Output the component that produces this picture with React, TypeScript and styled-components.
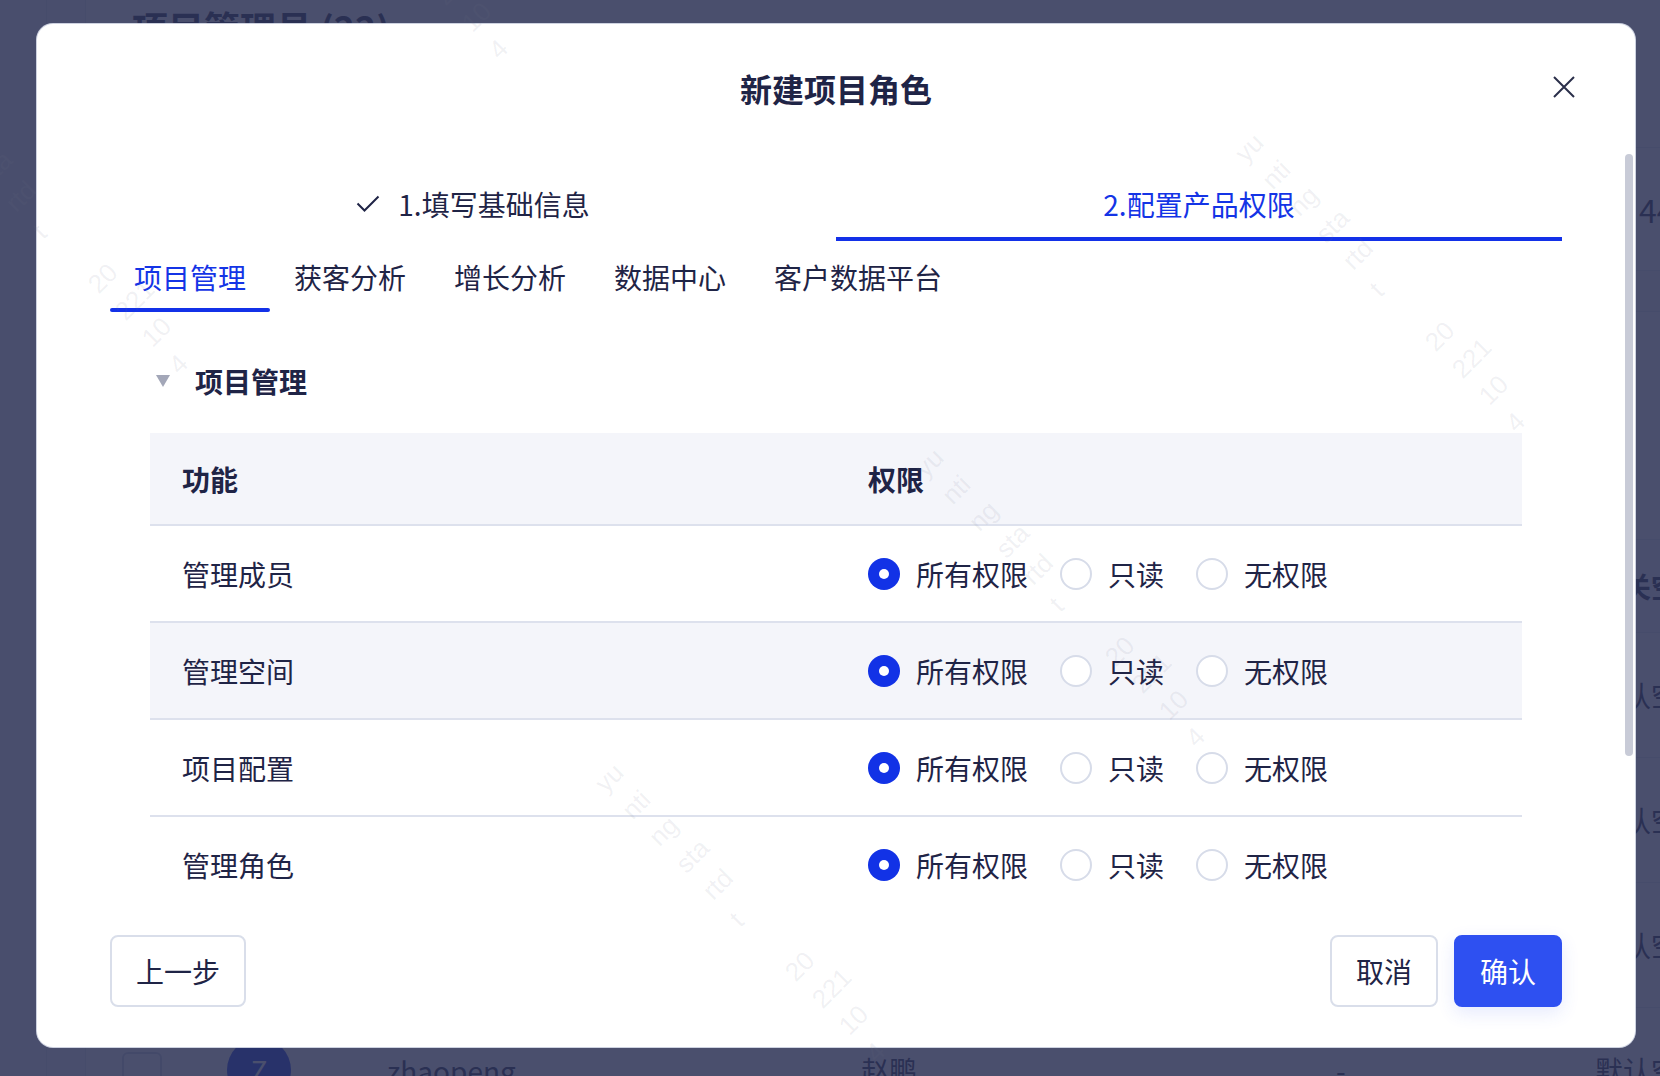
import React from "react";
import styled, { createGlobalStyle } from "styled-components";

const ink = "#1f2446";
const blue = "#1434e6";
const line = "#dde1ed";
const shade = "#f4f5fa";
const pageLine = "#e3e6ef";

const GlobalStyle = createGlobalStyle`
  * { box-sizing: border-box; }
  html, body { margin: 0; padding: 0; background: #494f6d; }
  body {
    font-family: "Noto Sans CJK SC", "Noto Sans", sans-serif;
    color: ${ink};
  }
`;

/* ---------- page behind the dialog ---------- */

const Page = styled.div`
  position: relative;
  width: 1660px;
  height: 1076px;
  overflow: hidden;
  background: #fff;
  display: grid;
  grid-template-columns: 47px 39px 1fr;
`;

const Rail = styled.div`
  border-right: 1px solid ${pageLine};
  background: #f7f8fb;
`;

const Main = styled.div`
  display: flex;
  flex-direction: column;
  min-width: 0;
`;

const PageTitle = styled.h1`
  margin: 0;
  height: 148px;
  padding: 5px 0 0 46px;
  font-size: 36px;
  line-height: 44px;
  font-weight: 700;
  white-space: nowrap;
  border-bottom: 1px solid ${pageLine};
`;

const Toolbar = styled.div`
  height: 123px;
  display: flex;
  align-items: center;
  padding-left: 1553px;
  font-size: 32px;
  white-space: nowrap;
  border-bottom: 1px solid ${pageLine};
`;

const Band = styled.div<{ $h: number; $fill?: boolean }>`
  height: ${(p) => p.$h}px;
  background: ${(p) => (p.$fill ? "#f3f4f8" : "#fff")};
  border-bottom: 1px solid ${pageLine};
`;

const MemberRow = styled.div<{ $head?: boolean }>`
  display: grid;
  grid-template-columns: 105px 160px 474px 475px 259px 1fr;
  align-items: center;
  height: ${(p) => (p.$head ? 93 : 125)}px;
  flex: none;
  font-size: 28px;
  font-weight: ${(p) => (p.$head ? 700 : 400)};
  border-bottom: 1px solid ${pageLine};
  background: ${(p) => (p.$head ? "#f5f6fa" : "#fff")};

  & > * {
    padding-left: 36px;
    white-space: nowrap;
  }
`;

const CheckBox = styled.span`
  display: block;
  width: 72px;
  height: 36px;
  &::before {
    content: "";
    display: block;
    width: 36px;
    height: 36px;
    border: 2px solid #cfd4e2;
    border-radius: 6px;
  }
`;

const AvatarCell = styled.div`
  display: flex;
`;

const Avatar = styled.span`
  width: 64px;
  height: 64px;
  border-radius: 50%;
  background: ${blue};
  color: #fff;
  font-size: 28px;
  display: flex;
  align-items: center;
  justify-content: center;
`;

/* ---------- overlay + dialog ---------- */

const Overlay = styled.div`
  position: absolute;
  inset: 0;
  background: rgba(44, 50, 85, 0.86);
  padding: 24px 0 0 37px;
`;

const Modal = styled.div`
  position: relative;
  width: 1598px;
  height: 1023px;
  padding: 0 73px;
  background: #fff;
  border-radius: 16px;
  box-shadow: 0 0 0 1px rgba(220, 224, 236, 0.9);
  display: flex;
  flex-direction: column;
  overflow: hidden;
`;

const Title = styled.h2`
  margin: 42px 0 0;
  text-align: center;
  font-size: 32px;
  line-height: 44px;
  font-weight: 600;
  color: ${ink};
`;

const CloseButton = styled.button`
  position: absolute;
  top: 52px;
  right: 60px;
  width: 22px;
  height: 22px;
  padding: 0;
  border: none;
  background: none;
  display: flex;
  color: #2a2f4a;
`;

const ScrollThumb = styled.div`
  position: absolute;
  top: 130px;
  right: 2px;
  width: 8px;
  height: 602px;
  border-radius: 4px;
  background: #c8cbd7;
`;

const Steps = styled.div`
  display: grid;
  grid-template-columns: 1fr 1fr;
  margin-top: 74px;
`;

const Step = styled.div<{ $active?: boolean }>`
  height: 57px;
  padding-bottom: 13px;
  display: flex;
  align-items: center;
  justify-content: center;
  gap: 18px;
  font-size: 28px;
  line-height: 40px;
  color: ${(p) => (p.$active ? blue : ink)};
  border-bottom: 4px solid ${(p) => (p.$active ? "#1331e8" : "transparent")};
`;

const Tabs = styled.div`
  display: flex;
  margin-top: 16px;
`;

const Tab = styled.div<{ $active?: boolean }>`
  position: relative;
  padding: 0 24px 15px;
  font-size: 28px;
  line-height: 40px;
  white-space: nowrap;
  color: ${(p) => (p.$active ? blue : ink)};

  &::after {
    content: "";
    position: absolute;
    left: 0;
    right: 0;
    bottom: 0;
    height: 4px;
    border-radius: 2px;
    background: ${(p) => (p.$active ? "#1331e8" : "transparent")};
  }
`;

const Body = styled.div`
  flex: 1;
  min-height: 0;
  overflow: hidden;
`;

const SectionHead = styled.div`
  display: flex;
  align-items: center;
  gap: 25px;
  margin-top: 49px;
  padding-left: 46px;
  font-size: 28px;
  line-height: 40px;
  font-weight: 700;
`;

const Table = styled.div`
  margin: 32px 40px 0;
`;

const TableRow = styled.div<{ $head?: boolean; $shaded?: boolean }>`
  display: grid;
  grid-template-columns: 1fr 1fr;
  align-items: center;
  height: ${(p) => (p.$head ? 93 : 97)}px;
  background: ${(p) => (p.$head || p.$shaded ? shade : "#fff")};
  border-bottom: 2px solid ${line};
  font-size: 28px;
  line-height: 40px;
  font-weight: ${(p) => (p.$head ? 700 : 400)};
`;

const Cell = styled.div`
  padding-left: 32px;
`;

const Options = styled.div`
  display: flex;
  align-items: center;
  gap: 32px;
  padding-left: 32px;
`;

const Option = styled.label`
  display: flex;
  align-items: center;
  gap: 16px;
  white-space: nowrap;
`;

const Radio = styled.span<{ $checked?: boolean }>`
  flex: none;
  width: 32px;
  height: 32px;
  border-radius: 50%;
  display: flex;
  align-items: center;
  justify-content: center;
  background: ${(p) => (p.$checked ? "#1232e6" : "#fff")};
  border: ${(p) => (p.$checked ? "none" : "2px solid #d7dce9")};

  &::after {
    content: "";
    display: ${(p) => (p.$checked ? "block" : "none")};
    width: 10px;
    height: 10px;
    border-radius: 50%;
    background: #fff;
  }
`;

const Footer = styled.div`
  display: flex;
  justify-content: space-between;
  padding: 28px 0 40px;
`;

const ButtonGroup = styled.div`
  display: flex;
  gap: 16px;
`;

const Button = styled.button<{ $primary?: boolean }>`
  height: 72px;
  padding: 0 24px;
  border-radius: 8px;
  font-family: inherit;
  font-size: 28px;
  line-height: 40px;
  border: 2px solid ${(p) => (p.$primary ? "#2e50f1" : "#d9deea")};
  background: ${(p) => (p.$primary ? "#2e50f1" : "#fff")};
  color: ${(p) => (p.$primary ? "#fff" : ink)};
  box-shadow: ${(p) => (p.$primary ? "0 6px 18px rgba(46, 80, 241, 0.12)" : "none")};
`;

/* ---------- watermark ---------- */

const WatermarkLayer = styled.div`
  position: absolute;
  inset: 0;
  pointer-events: none;
  z-index: 5;
`;

const Mark = styled.div<{ $x: number; $y: number }>`
  position: absolute;
  left: ${(p) => p.$x}px;
  top: ${(p) => p.$y}px;
  white-space: pre;
  font-family: "Liberation Sans", Arial, sans-serif;
  font-size: 26px;
  line-height: 38px;
  color: rgba(110, 115, 140, 0.1);
  transform: rotate(-45deg);
  transform-origin: 0 0;
`;

const markA = "yu\nnti\nng\nsta\nrtd\nt";
const markB = "20\n221\n10\n4";

const marks: { x: number; y: number; text: string }[] = [
  { x: 1226, y: 144, text: markA },
  { x: 906, y: 459, text: markA },
  { x: 586, y: 774, text: markA },
  { x: -111, y: 86, text: markA },
  { x: 1416, y: 333, text: markB },
  { x: 1096, y: 648, text: markB },
  { x: 776, y: 963, text: markB },
  { x: 79, y: 275, text: markB },
  { x: 399, y: -40, text: markB },
];

const CheckIcon = () => (
  <svg width="24" height="18" viewBox="0 0 24 18" fill="none">
    <polyline points="1.5,8.5 8.5,15.5 22.5,1.5" stroke={ink} strokeWidth="2" />
  </svg>
);

const CaretDown = () => (
  <svg width="14" height="12" viewBox="0 0 14 12">
    <polygon points="0,0 14,0 7,12" fill="#a3a7b8" />
  </svg>
);

const CloseIcon = () => (
  <svg width="22" height="22" viewBox="0 0 22 22">
    <path d="M1 1 L21 21 M21 1 L1 21" stroke="currentColor" strokeWidth="2" />
  </svg>
);

const tabs = ["项目管理", "获客分析", "增长分析", "数据中心", "客户数据平台"];
const features = ["管理成员", "管理空间", "项目配置", "管理角色"];
const levels = ["所有权限", "只读", "无权限"];

const members = [
  { initial: "L", account: "liming", name: "李明", phone: "-", space: "默认空间" },
  { initial: "W", account: "wangfang", name: "王芳", phone: "-", space: "默认空间" },
  { initial: "C", account: "chenjie", name: "陈杰", phone: "-", space: "默认空间" },
  { initial: "Z", account: "zhaopeng", name: "赵鹏", phone: "-", space: "默认空间" },
];

const App = () => {
  return (
    <>
      <GlobalStyle />
      <Page>
        <Rail />
        <Rail />
        <Main>
          <PageTitle>项目管理员 (22)</PageTitle>
          <Toolbar>44</Toolbar>
          <Band $h={41} $fill />
          <Band $h={228} />
          <MemberRow $head>
            <span />
            <span />
            <span>用户名</span>
            <span>姓名</span>
            <span>手机号</span>
            <span>相关空间</span>
          </MemberRow>
          {members.map((m) => (
            <MemberRow key={m.account}>
              <CheckBox />
              <AvatarCell>
                <Avatar>{m.initial}</Avatar>
              </AvatarCell>
              <span>{m.account}</span>
              <span>{m.name}</span>
              <span>{m.phone}</span>
              <span>{m.space}</span>
            </MemberRow>
          ))}
        </Main>

        <Overlay>
          <Modal>
            <Title>新建项目角色</Title>
            <CloseButton aria-label="关闭">
              <CloseIcon />
            </CloseButton>
            <ScrollThumb />

            <Steps>
              <Step>
                <CheckIcon />
                <span>1.填写基础信息</span>
              </Step>
              <Step $active>
                <span>2.配置产品权限</span>
              </Step>
            </Steps>

            <Tabs>
              {tabs.map((t, i) => (
                <Tab key={t} $active={i === 0}>
                  {t}
                </Tab>
              ))}
            </Tabs>

            <Body>
              <SectionHead>
                <CaretDown />
                <span>项目管理</span>
              </SectionHead>

              <Table>
                <TableRow $head>
                  <Cell>功能</Cell>
                  <Cell>权限</Cell>
                </TableRow>
                {features.map((f, i) => (
                  <TableRow key={f} $shaded={i === 1}>
                    <Cell>{f}</Cell>
                    <Options>
                      {levels.map((l, j) => (
                        <Option key={l}>
                          <Radio $checked={j === 0} />
                          {l}
                        </Option>
                      ))}
                    </Options>
                  </TableRow>
                ))}
              </Table>
            </Body>

            <Footer>
              <Button>上一步</Button>
              <ButtonGroup>
                <Button>取消</Button>
                <Button $primary>确认</Button>
              </ButtonGroup>
            </Footer>
          </Modal>
        </Overlay>

        <WatermarkLayer>
          {marks.map((m, i) => (
            <Mark key={i} $x={m.x} $y={m.y}>
              {m.text}
            </Mark>
          ))}
        </WatermarkLayer>
      </Page>
    </>
  );
};

export default App;
